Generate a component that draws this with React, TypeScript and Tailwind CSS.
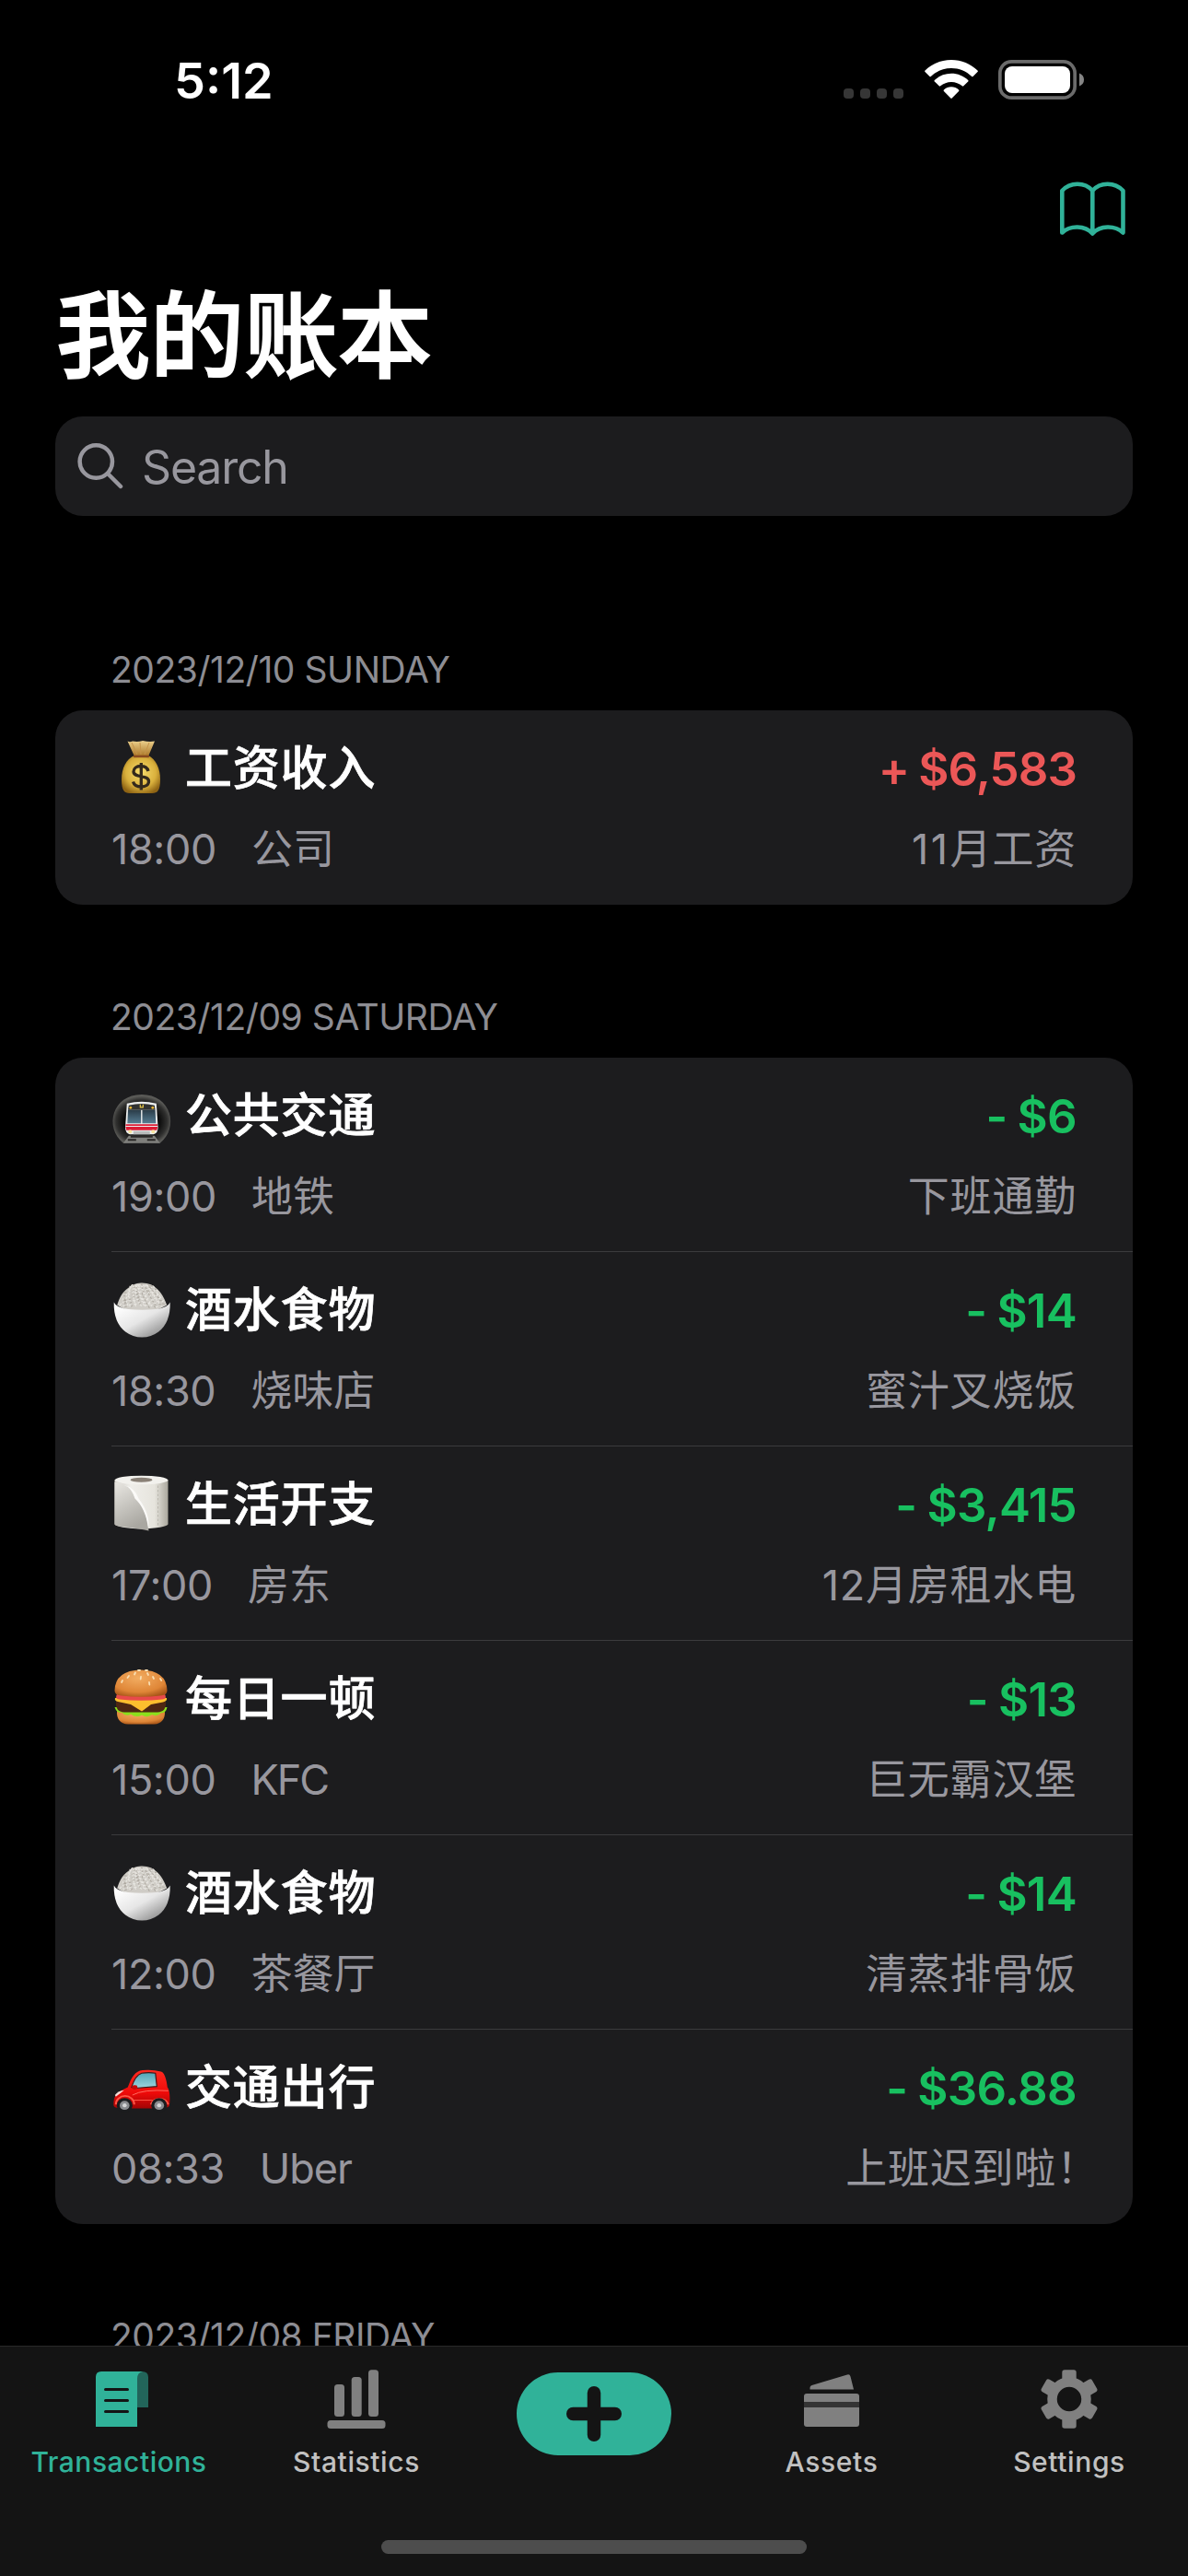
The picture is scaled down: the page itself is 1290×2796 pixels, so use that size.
import React from "react";

type Kind = "bag" | "metro" | "rice" | "paper" | "burger" | "car";

interface Entry {
  icon: Kind;
  title: string;
  amount: string;
  income?: boolean;
  time: string;
  place: string;
  placeClass?: string;
  note: React.ReactNode;
}

const sunday: Entry[] = [
  {
    icon: "bag",
    title: "工资收入",
    amount: "$6,583",
    income: true,
    time: "18:00",
    place: "公司",
    note: (
      <>
        <span className="tracking-[2.5px]">11</span>月工资
      </>
    ),
  },
];

const saturday: Entry[] = [
  { icon: "metro", title: "公共交通", amount: "$6", time: "19:00", place: "地铁", note: "下班通勤" },
  { icon: "rice", title: "酒水食物", amount: "$14", time: "18:30", place: "烧味店", note: "蜜汁叉烧饭" },
  { icon: "paper", title: "生活开支", amount: "$3,415", time: "17:00", place: "房东", note: "12月房租水电" },
  { icon: "burger", title: "每日一顿", amount: "$13", time: "15:00", place: "KFC", placeClass: "tracking-[-2px]", note: "巨无霸汉堡" },
  { icon: "rice", title: "酒水食物", amount: "$14", time: "12:00", place: "茶餐厅", note: "清蒸排骨饭" },
  {
    icon: "car",
    title: "交通出行",
    amount: "$36.88",
    time: "08:33",
    place: "Uber",
    placeClass: "tracking-[-1px]",
    note: (
      <>
        上班迟到啦<span className="-mr-[24px]">！</span>
      </>
    ),
  },
];

function Bag() {
  return (
    <g transform="translate(0 -1)">
      <defs>
        <radialGradient id="bagG" cx="0.5" cy="0.45" r="0.6">
          <stop offset="0" stopColor="#f6dc6c" />
          <stop offset="0.65" stopColor="#d9b03c" />
          <stop offset="1" stopColor="#8f6414" />
        </radialGradient>
        <linearGradient id="bagT" x1="0" y1="0" x2="0" y2="1">
          <stop offset="0" stopColor="#ecd08c" />
          <stop offset="1" stopColor="#a97424" />
        </linearGradient>
      </defs>
      <path d="M17.500 3.500 Q20 5 23 3.500 Q29 4.500 34 3 Q41 4.500 47 3.500 L40 20 H25 Z" fill="url(#bagT)" />
      <path d="M22 5 L28 18 M31 5 L32 18 M41 5 L36 18" stroke="#c5934a" strokeWidth="1" />
      <path d="M25 19 C16 23 11 33 11 45 C11 57 14 60 20 60 H44 C50 60 53 57 53 45 C53 33 48 23 40 19 Z" fill="url(#bagG)" />
      <path d="M25 20 H40" stroke="#8a4b20" strokeWidth="2.400" strokeLinecap="round" />
      <path d="M40 36 C39 32 36 30.500 32 30.500 C27 30.500 24 33 24 36.500 C24 44 40.500 39.500 40.500 47 C40.500 51 37 53 32.500 53 C27.500 53 24.500 51 23.500 47.500 M32.300 27 V56.500" fill="none" stroke="#33291c" strokeWidth="3.300" />
    </g>
  );
}

function Metro() {
  return (
    <g transform="translate(0.8 4.8)">
      <defs>
        <radialGradient id="tun" cx="0.5" cy="0.55" r="0.52">
          <stop offset="0.55" stopColor="#060606" />
          <stop offset="0.85" stopColor="#30302f" />
          <stop offset="1" stopColor="#5a5a57" />
        </radialGradient>
        <linearGradient id="win" x1="0" y1="0" x2="0" y2="1">
          <stop offset="0" stopColor="#2a3c48" />
          <stop offset="1" stopColor="#567d93" />
        </linearGradient>
      </defs>
      <path d="M12 57 C-9 40 0 4.300 32 4.300 C64 4.300 73 40 52 57 Z" fill="url(#tun)" />
      <path d="M18 49 L12 57 H52 L46 49 Z" fill="#7f7f7c" />
      <path d="M20 50 H44 M17 53.500 H26 M38 53.500 H47" stroke="#2a2827" strokeWidth="2" />
      <path d="M16 14 Q32 10 48 14 L49.800 40 Q49.800 46 45 47.500 H19 Q14.200 46 14.200 40 Z" fill="#eceeee" />
      <path d="M18 16 Q32 12.500 46 16 L46.800 21 H17.200 Z" fill="#323332" />
      <path d="M17.200 21 H31.300 V35.500 H16.500 Z M32.700 21 H46.800 L47.500 35.500 H32.700 Z" fill="url(#win)" />
      <path d="M14.700 36.500 H49.300 V38.300 H14.700 Z M14.500 39.300 H49.500 L48.500 43 H15.500 Z" fill="#dc1d36" />
      <path d="M23 44 H41 V47.500 H23 Z" fill="#b9bbbb" />
      <circle cx="20" cy="18.500" r="1.400" fill="#f0bd35" />
      <circle cx="44" cy="18.500" r="1.400" fill="#f0bd35" />
      <path d="M30.500 15 V18 H33.500 V15" fill="none" stroke="#e7c94a" strokeWidth="1.200" />
      <circle cx="19.500" cy="44.500" r="2" fill="#f7e3a0" />
      <circle cx="44.500" cy="44.500" r="2" fill="#f7e3a0" />
    </g>
  );
}

// Grain positions follow two irrational steps so they scatter evenly without repeating.
const grains = Array.from({ length: 150 }, (_, i) => {
  const y = 5 + ((i * 0.7548777) % 1) * 24;
  const half = 7 + Math.sqrt(y - 4) * 3.6;
  const x = 32 + (((i * 0.5698403) % 1) * 2 - 1) * half;
  const angle = i * 2.4;
  return { x, y, dx: Math.cos(angle) * 2.2, dy: Math.sin(angle) * 1.8 };
});

function Rice() {
  return (
    <g transform="translate(1.200 -0.500)">
      <defs>
        <linearGradient id="bowl" x1="0.1" y1="0.1" x2="0.85" y2="0.95">
          <stop offset="0" stopColor="#ffffff" />
          <stop offset="0.5" stopColor="#e6e6e6" />
          <stop offset="1" stopColor="#8a8a8a" />
        </linearGradient>
      </defs>
      <path d="M5 27 C7 22 8 16 15 10 Q23 2.500 32 3 Q43 3 49 10 C55 16 57 22 59 27 Q46 35 32 34 Q16 35 5 27 Z" fill="#cfccc6" />
      {grains.map((g, i) => (
        <path
          key={i}
          d={`M${g.x} ${g.y} l${g.dx} ${g.dy}`}
          stroke={i % 3 === 0 ? "#b0aba3" : "#e9e7e2"}
          strokeWidth="1.100"
          strokeLinecap="round"
        />
      ))}
      <path d="M1.500 24 Q4 30 17 31.500 Q32 33 47 31.500 Q60 30 62.500 24 Q63 46 50 56 Q42 62 32 62 Q22 62 14 56 Q1 46 1.500 24 Z" fill="url(#bowl)" />
    </g>
  );
}

function Paper() {
  return (
    <g transform="translate(0.500 -1.500)">
      <defs>
        <linearGradient id="roll" x1="0" y1="0" x2="1" y2="0">
          <stop offset="0" stopColor="#cfcbc2" />
          <stop offset="0.3" stopColor="#efeeea" />
          <stop offset="0.75" stopColor="#e6e4dd" />
          <stop offset="1" stopColor="#aaa79d" />
        </linearGradient>
        <linearGradient id="sheet" x1="0" y1="0" x2="0.4" y2="1">
          <stop offset="0" stopColor="#e9e7e2" />
          <stop offset="1" stopColor="#a9a7a1" />
        </linearGradient>
      </defs>
      <path d="M3 7 V55 Q6 59 32 60 Q58 59 61 55 V7 Z" fill="url(#roll)" />
      <ellipse cx="32" cy="7" rx="29" ry="4.800" fill="#f2f1ed" />
      <ellipse cx="32" cy="6.800" rx="12" ry="2.500" fill="#8a8177" />
      <path d="M3 9 Q17 10 22 20 Q25 27 29 30 Q39 44 40 62 Q32 60 15 58 Q4 57 3 55 Z" fill="url(#sheet)" />
      <path d="M12 12 Q22 15 25 27 Q37 38 39.500 60 Q42 44 29 27 Q25 15 12 12 Z" fill="#fbfaf8" />
      <path d="M50 13 V58" stroke="#bcb9b0" strokeWidth="1" strokeDasharray="2.500 2" />
    </g>
  );
}

function Burger() {
  return (
    <g transform="translate(0 -2)">
      <defs>
        <radialGradient id="bun" cx="0.45" cy="0.3" r="0.75">
          <stop offset="0" stopColor="#f2ad62" />
          <stop offset="0.7" stopColor="#df8637" />
          <stop offset="1" stopColor="#a65417" />
        </radialGradient>
      </defs>
      <path d="M6 46 Q5 61 18 61.500 H46 Q59 61 58 46 Z" fill="url(#bun)" />
      <path d="M3.500 43 Q6 50 11 48.500 Q16 54 21 50.500 Q27 55 33 51.500 Q39 55 44 51 Q50 54 54 49 Q59 50 60.500 43 Z" fill="#8be01c" />
      <path d="M5 37 Q4 48 14 48.500 H50 Q60 48 59 37 Z" fill="#4e2713" />
      <path d="M4 33 Q32 30 60 33 Q61 36 56 37.500 L43 40 L33 47.500 L21 40 L7 37 Q3 36 4 33 Z" fill="#fdbf2e" />
      <path d="M6 29 Q32 33 58 29 Q61 34 55 34.500 Q32 37 9 34.500 Q3 34 6 29 Z" fill="#e84a4b" />
      <path d="M3.500 25 Q4 3 32 2.500 Q60 3 60.500 25 Q60.500 30 53 30.500 Q32 33 11 30.500 Q3.500 30 3.500 25 Z" fill="url(#bun)" />
      <path d="M19 9 l-1.500 2 M26 5.500 l-1 2 M32 10 l-.3 2.500 M39 6 l1 2 M45 10 l1 2 M41 16 l.3 2.500 M53 12 l1.200 2 M29 3 h2 M12 14 l-1 2 M37 3 h2" stroke="#f8dfb4" strokeWidth="1.800" strokeLinecap="round" />
    </g>
  );
}

function Car() {
  return (
    <g transform="translate(0.800 6.500) scale(1 0.930)">
      <defs>
        <linearGradient id="carG" x1="0" y1="0" x2="0" y2="1">
          <stop offset="0" stopColor="#ff2a20" />
          <stop offset="0.6" stopColor="#ee0a09" />
          <stop offset="1" stopColor="#a30505" />
        </linearGradient>
        <linearGradient id="glass" x1="0" y1="0" x2="0" y2="1">
          <stop offset="0" stopColor="#4fa4b5" />
          <stop offset="1" stopColor="#9ed4de" />
        </linearGradient>
      </defs>
      <path d="M1.500 48 C1.500 36 5 33 17 27 C21 15 25 8 33 7 Q44 6 53 8.500 Q58 10 60 27 C63 31 63 42 62 49 Q60 51.500 50 51.500 H8 Q2 51 1.500 48 Z" fill="url(#carG)" />
      <path d="M21 27 Q25 13 32 10.500 Q40 9 47 10.500 L48.500 26 L25 28 Z" fill="url(#glass)" stroke="#401616" strokeWidth="1.200" />
      <path d="M3 36 Q7 31 13 30.500 Q9 34 4 38 Z" fill="#f5dcd8" />
      <path d="M22 36 Q34 29 61 31" fill="none" stroke="#ff6d60" strokeWidth="1" />
      <path d="M22 42 H44" stroke="#ff594b" strokeWidth="1" />
      <rect x="21.500" y="24.500" width="6" height="5" rx="2.300" fill="#c60807" />
      <path d="M4 47 A10 10 0 0 1 24 47 M42 47 A10 10 0 0 1 61 47" fill="none" stroke="#ff5546" strokeWidth="2" />
      {[13.5, 51].map((x) => (
        <g key={x}>
          <circle cx={x} cy="48" r="8.500" fill="#1b1c1e" />
          <circle cx={x} cy="48" r="5.300" fill="#8a8c8f" />
          <circle cx={x} cy="48" r="2.300" fill="#d4d5d6" />
        </g>
      ))}
    </g>
  );
}

const drawings: Record<Kind, () => React.JSX.Element> = {
  bag: Bag,
  metro: Metro,
  rice: Rice,
  paper: Paper,
  burger: Burger,
  car: Car,
};

function Row({ e, last }: { e: Entry; last: boolean }) {
  const Drawing = drawings[e.icon];
  return (
    <li className="h-[211px] pl-[61px]">
      <div className={last ? "h-full pt-[33px] pr-[61px]" : "h-full border-b border-[#3b3b3d] pt-[33px] pr-[61px]"}>
        <div className="flex h-[60px] items-center justify-between text-[51px] leading-[60px] font-semibold">
          <div className="flex items-center">
            <svg viewBox="0 0 64 64" className="mr-[16px] size-[64px] overflow-visible">
              <Drawing />
            </svg>
            <span className="font-medium tracking-[0.8px] text-white [-webkit-text-stroke:0.7px_white]">{e.title}</span>
          </div>
          <span
            className={
              e.income
                ? "mt-[2px] tracking-[-0.9px] [word-spacing:-2px] text-[#eb5757]"
                : "mt-[2px] tracking-[-0.7px] [word-spacing:-1px] text-[#18c060]"
            }
          >
            {e.income ? "+" : "-"} {e.amount}
          </span>
        </div>
        <div className="mt-[31px] flex h-[54px] justify-between text-[45px] leading-[54px] whitespace-nowrap text-[#98979e]">
          <div className="flex gap-[38px]">
            <span className="tracking-[-0.4px]">{e.time}</span>
            <span className={e.placeClass}>{e.place}</span>
          </div>
          <span className="tracking-[0.8px]">{e.note}</span>
        </div>
      </div>
    </li>
  );
}

function Section({ label, entries }: { label: string; entries: Entry[] }) {
  return (
    <section className="px-[60px]">
      <h2 className="h-[166px] pt-[98px] pl-[60px] text-[39px] leading-[48px] tracking-[-0.45px] text-[#8d8d93]">{label}</h2>
      <ul className="overflow-hidden rounded-[30px] bg-[#1c1c1e]">
        {entries.map((e, i) => (
          <Row key={e.time} e={e} last={i === entries.length - 1} />
        ))}
      </ul>
    </section>
  );
}

function StatusBar() {
  return (
    <div className="flex h-[177px] items-start justify-between pt-[58px] pr-[113px] pl-[189px] text-white">
      <span className="text-[54px] leading-[60px] font-semibold">5:12</span>
      <div className="flex pt-[7px]">
        <div className="mr-[23px] flex gap-[7px] pt-[31px]">
          {[0, 1, 2, 3].map((i) => (
            <span key={i} className="size-[11px] rounded-[4px] bg-[#363636]" />
          ))}
        </div>
        <svg viewBox="0 0 58 43" className="mr-[22px] h-[43px] w-[58px]" fill="#fff">
          <path d="M29 0 C40 0 50 4.300 57.500 11.500 C58 12 58 12.500 57.500 13 L52.500 18 C52.100 18.400 51.700 18.400 51.200 18 C45 12.300 37.500 9.100 29 9.100 C20.500 9.100 13 12.300 6.800 18 C6.300 18.400 5.900 18.400 5.500 18 L0.500 13 C0 12.500 0 12 0.500 11.500 C8 4.300 18 0 29 0 Z" />
          <path d="M29 14.800 C36 14.800 42.300 17.500 47.200 21.900 C47.700 22.400 47.700 22.900 47.200 23.400 L42.300 28.300 C41.800 28.800 41.300 28.800 40.800 28.300 C37.500 25.500 33.400 23.900 29 23.900 C24.600 23.900 20.500 25.500 17.200 28.300 C16.700 28.800 16.200 28.800 15.700 28.300 L10.800 23.400 C10.300 22.900 10.300 22.400 10.800 21.900 C15.700 17.500 22 14.800 29 14.800 Z" />
          <path d="M29 29.300 C32 29.300 34.800 30.400 37.100 32.400 C37.600 32.900 37.600 33.400 37.100 33.900 L29.700 41.600 C29.200 42.100 28.800 42.100 28.300 41.600 L20.900 33.900 C20.400 33.400 20.400 32.900 20.900 32.400 C23.200 30.400 26 29.300 29 29.300 Z" />
        </svg>
        <svg viewBox="0 0 93 43" className="h-[43px] w-[93px]">
          <rect x="1.850" y="1.850" width="81.300" height="39.300" rx="12.500" fill="none" stroke="#6b6b6b" strokeWidth="3.700" />
          <rect x="7" y="7" width="71" height="29" rx="8" fill="#fff" />
          <path d="M88 14.500 Q93 16.500 93 21.500 Q93 26.500 88 28.500 Z" fill="#858585" />
        </svg>
      </div>
    </div>
  );
}

function Tab({ label, active, children }: { label: string; active?: boolean; children: React.ReactNode }) {
  return (
    <div className="flex flex-1 flex-col items-center">
      <svg viewBox="0 0 66 66" className="mt-[24px] size-[66px]">
        {children}
      </svg>
      <span
        className={
          active
            ? "mt-[17px] text-[30px] leading-[36px] font-medium tracking-[0.5px] text-[#30b299]"
            : "mt-[17px] text-[30px] leading-[36px] font-medium tracking-[0.6px] text-[#c1c1c1]"
        }
      >
        {label}
      </span>
    </div>
  );
}

const teeth = [0, 60, 120, 180, 240, 300];

function TabBar() {
  return (
    <nav className="flex h-[250px] flex-col justify-between border-t border-[#292929] bg-[#141414] pb-[24px]">
      <div className="flex">
        <Tab label="Transactions" active>
          <path d="M53 3 H58 Q65 3 65 9 V42 H53 Z" fill="#22655a" />
          <path d="M8 9 Q8 3 14 3 H59 Q53 4 53 11 V63 H8 Z" fill="#30b299" />
          <path d="M18.500 22.500 H42.500 M18.500 34.500 H42.500 M18.500 46.500 H42.500" stroke="#141414" strokeWidth="3" strokeLinecap="round" />
        </Tab>
        <Tab label="Statistics">
          <g fill="#808080">
            <rect x="9" y="17" width="11" height="35" rx="3.500" />
            <rect x="27.700" y="9" width="11" height="43" rx="3.500" />
            <rect x="46" y="1.300" width="11" height="50.700" rx="3.500" />
            <rect x="1.500" y="56" width="63" height="9" rx="3.500" />
          </g>
        </Tab>
        <div className="flex flex-1 justify-center">
          <button className="mt-[28px] flex h-[90px] w-[168px] items-center justify-center rounded-full bg-[#30b299]">
            <svg viewBox="0 0 60 60" className="size-[60px]" stroke="#141414" strokeWidth="14.500" strokeLinecap="round">
              <path d="M30 7.250 V52.750 M7.250 30 H52.750" />
            </svg>
          </button>
        </div>
        <Tab label="Assets">
          <path d="M9.500 22.500 V20.500 Q9.500 18.500 11.500 18 L50 6.500 Q52.800 5.700 53.500 8.500 L57 22.500 Z" fill="#808080" />
          <rect x="3" y="27" width="60" height="36" rx="3" fill="#808080" />
          <rect x="3" y="36" width="60" height="6" fill="#343434" />
        </Tab>
        <Tab label="Settings">
          <g fill="#808080">
            {teeth.map((a) => (
              <path key={a} transform={`rotate(${a} 33 33)`} d="M25.300 14 V4 Q25.300 1.200 28 1.200 H38 Q40.700 1.200 40.700 4 V14 Z" />
            ))}
            <circle cx="33" cy="33" r="18.500" fill="none" stroke="#808080" strokeWidth="10.500" />
          </g>
        </Tab>
      </div>
      <div className="mx-auto h-[15px] w-[462px] rounded-full bg-[#4d4d4d]" />
    </nav>
  );
}

export default function App() {
  return (
    <div className="flex h-[2796px] w-[1290px] flex-col overflow-hidden bg-black font-['Inter','Noto_Sans_CJK_SC',sans-serif]">
      <main className="min-h-0 flex-1 overflow-hidden">
        <StatusBar />
        <header className="px-[60px]">
          <div className="flex h-[119px] justify-end pt-[18px] pr-[6px]">
            <svg viewBox="0 0 76 64" className="h-[64px] w-[76px]" fill="none" stroke="#30b299" strokeWidth="4.600" strokeLinejoin="round" strokeLinecap="round">
              <path d="M38.300 12 C30 2.300 14 2.300 5.300 12 V57.500 C14 49.300 30 49.300 38.300 58.500 C46.600 49.300 62.600 49.300 71.500 57.500 V12 C62.600 2.300 46.600 2.300 38.300 12 Z M38.300 12 V58" />
            </svg>
          </div>
          <h1 className="h-[156px] pt-[7px] pl-px text-[102px] leading-[124px] font-medium text-white [-webkit-text-stroke:2px_white]">
            我的账本
          </h1>
          <div className="flex h-[108px] items-center rounded-[30px] bg-[#1c1c1e] text-[50px] tracking-[-1.2px] text-[#98979e]">
            <svg viewBox="0 0 50 50" className="mt-[-1px] ml-[24px] size-[50px]" fill="none" stroke="#98979e" strokeWidth="4.500" strokeLinecap="round">
              <circle cx="20.300" cy="20" r="17.700" />
              <path d="M33 33 L47 47" />
            </svg>
            <span className="mt-[2px] ml-[20px]">Search</span>
          </div>
        </header>
        <div className="pt-[45px]">
          <Section label="2023/12/10 SUNDAY" entries={sunday} />
          <Section label="2023/12/09 SATURDAY" entries={saturday} />
          <Section label="2023/12/08 FRIDAY" entries={[]} />
        </div>
      </main>
      <TabBar />
    </div>
  );
}
